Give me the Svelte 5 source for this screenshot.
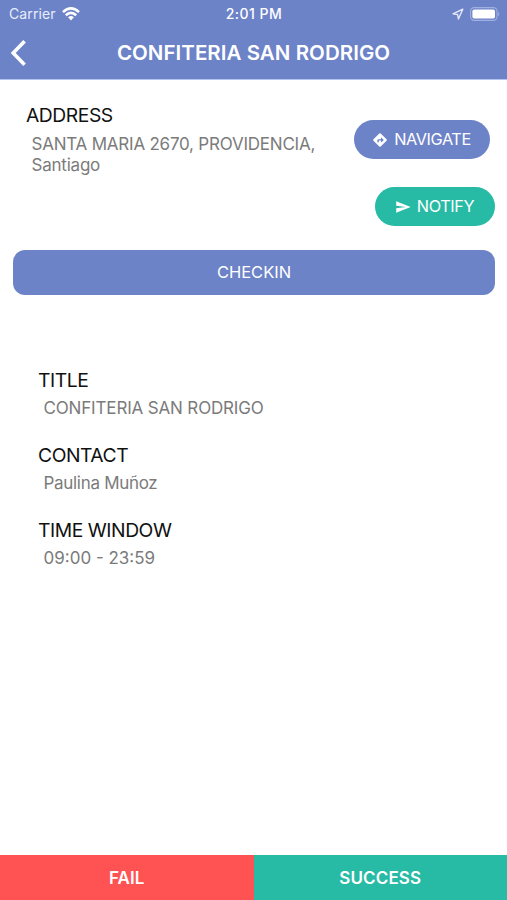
<script>
  const details = [
    { label: 'TITLE', value: 'CONFITERIA SAN RODRIGO', ls: -0.16 },
    { label: 'CONTACT', value: 'Paulina Muñoz', ls: -0.3 },
    { label: 'TIME WINDOW', value: '09:00 - 23:59', ls: 0 }
  ];
</script>

<div class="screen">
  <header>
    <div class="status">
      <div class="carrier">
        <span>Carrier</span>
        <svg width="18" height="14" viewBox="0 0 18 14" fill="none" stroke="#fff" stroke-width="2.6">
          <path d="M1 5.1Q9 -2.3 17 5.1" />
          <path d="M3.8 8.2Q9 3.5 14.2 8.2" />
          <path d="M6.1 10.3Q9 7.8 11.9 10.3L9 13.4Z" fill="#fff" stroke="none" />
        </svg>
      </div>
      <span class="time">2:01 PM</span>
      <div class="indicators">
        <svg width="12" height="12" viewBox="0 0 12 12" fill="none" stroke="#e4e9fa" stroke-width="1.4" stroke-linejoin="round">
          <path d="M10.8 1.2L1 5.8L5.6 6.5L6.4 11Z" />
        </svg>
        <svg width="30" height="14" viewBox="0 0 30 14">
          <rect x="0.6" y="0.6" width="26.4" height="12.8" rx="3.6" fill="none" stroke="#a0b0e0" stroke-width="1.1" />
          <rect x="2.4" y="2.4" width="22.6" height="9.2" rx="1.8" fill="#fff" />
          <path d="M28.2 4.7Q30.6 7 28.2 9.3Z" fill="#a0b0e0" />
        </svg>
      </div>
    </div>
    <div class="nav">
      <button class="back" aria-label="Back">
        <svg width="16" height="26" viewBox="0 0 16 26" fill="none" stroke="#fff" stroke-width="3.6">
          <path d="M14.6 1.3L3.2 13L14.6 24.7" />
        </svg>
      </button>
      <h1>CONFITERIA SAN RODRIGO</h1>
    </div>
  </header>

  <main>
    <section class="top">
      <div class="address">
        <h2>ADDRESS</h2>
        <p>SANTA MARIA 2670, PROVIDENCIA,<br />Santiago</p>
      </div>
      <div class="actions">
        <button class="pill navigate">
          <svg width="14" height="14" viewBox="0 0 14 14">
            <path d="M6.3 0.5Q7 -0.1 7.7 0.5L13.5 6.3Q14.1 7 13.5 7.7L7.7 13.5Q7 14.1 6.3 13.5L0.5 7.7Q-0.1 7 0.5 6.3Z" fill="#fff" />
            <path d="M4.4 9.3V7.2Q4.4 6.2 5.4 6.2H8V4.2L10.8 6.9L8 9.5V7.6H5.8V9.3Z" fill="#6d83c8" />
          </svg>
          <span>NAVIGATE</span>
        </button>
        <button class="pill notify">
          <svg width="15" height="12" viewBox="0 0 15 12">
            <path d="M0.2 0.2L14.7 6L0.2 11.8V7.3L9.8 6L0.2 4.7Z" fill="#fff" />
          </svg>
          <span>NOTIFY</span>
        </button>
      </div>
    </section>

    <button class="checkin">CHECKIN</button>

    <section class="details">
      {#each details as item}
        <div class="item">
          <h2>{item.label}</h2>
          <p style="letter-spacing: {item.ls}px">{item.value}</p>
        </div>
      {/each}
    </section>
  </main>

  <footer>
    <button class="fail">FAIL</button>
    <button class="success">SUCCESS</button>
  </footer>
</div>

<style>
  :global(body) {
    margin: 0;
    background: #fff;
  }
  .screen {
    height: 900px;
    display: flex;
    flex-direction: column;
    font-family: Inter, "Liberation Sans", sans-serif;
    color: #111;
    overflow: hidden;
  }
  h1, h2, p {
    margin: 0;
    font-weight: 400;
    white-space: nowrap;
  }
  button {
    border: 0;
    padding: 0;
    margin: 0;
    font: inherit;
    color: #fff;
    background: none;
  }
  svg {
    display: block;
    flex: none;
  }
  header {
    height: 79px;
    flex: none;
    background: #6d83c8;
    color: #fff;
    border-bottom: 1px solid #b4c3ef;
    box-sizing: content-box;
  }
  .status {
    height: 27px;
    padding: 0 7px 0 9px;
    display: grid;
    grid-template-columns: 1fr auto 1fr;
    align-items: center;
    font-size: 14px;
    line-height: 26px;
  }
  .carrier {
    display: flex;
    align-items: center;
    gap: 6px;
    color: #e8edfc;
    letter-spacing: 0.1px;
  }
  .time {
    font-weight: 500;
    font-size: 14px;
    letter-spacing: 0.5px;
    line-height: 27px;
    margin-right: 1px;
  }
  .indicators {
    display: flex;
    align-items: center;
    justify-content: flex-end;
    gap: 6px;
  }
  .nav {
    height: 51px;
    display: grid;
    grid-template-columns: 40px 1fr 40px;
    align-items: center;
  }
  .back {
    padding-left: 10px;
  }
  h1 {
    text-align: center;
    font-size: 20.5px;
    letter-spacing: 0.05px;
    font-weight: 600;
    line-height: 50px;
  }
  h2 {
    font-size: 19.3px;
    letter-spacing: -0.45px;
    line-height: 26px;
  }
  p {
    margin: 5px 0 0 5.5px;
    font-size: 17px;
    letter-spacing: -0.22px;
    line-height: 21px;
    color: #7b7b7b;
  }
  main {
    flex: 1;
  }
  .top {
    display: flex;
    justify-content: space-between;
    padding: 22px 12px 0 26px;
    height: 148px;
  }
  .address p {
    margin-top: 6px;
  }
  .actions {
    display: flex;
    flex-direction: column;
    align-items: flex-end;
    gap: 28px;
    padding-top: 18px;
  }
  .pill {
    height: 39px;
    border-radius: 20px;
    display: flex;
    align-items: center;
    justify-content: center;
    gap: 7px;
    font-size: 16.3px;
    letter-spacing: -0.4px;
  }
  .pill span {
    line-height: 20px;
    padding-bottom: 1px;
  }
  .navigate {
    width: 136px;
    margin-right: 5px;
    background: #6d83c8;
  }
  .notify {
    width: 120px;
    gap: 6px;
    background: #27baa4;
  }
  .checkin {
    display: block;
    width: 482px;
    height: 45px;
    margin-left: 13px;
    padding-bottom: 1px;
    border-radius: 12px;
    background: #6d83c8;
    font-size: 16.5px;
  }
  .details {
    padding: 72px 0 0 38px;
    display: flex;
    flex-direction: column;
    gap: 23px;
  }
  footer {
    height: 45px;
    flex: none;
    display: flex;
  }
  footer button {
    flex: 1;
    font-size: 17px;
    font-weight: 600;
    letter-spacing: 0.12px;
  }
  .fail {
    background: #ff5252;
  }
  .success {
    background: #27baa4;
  }
</style>
